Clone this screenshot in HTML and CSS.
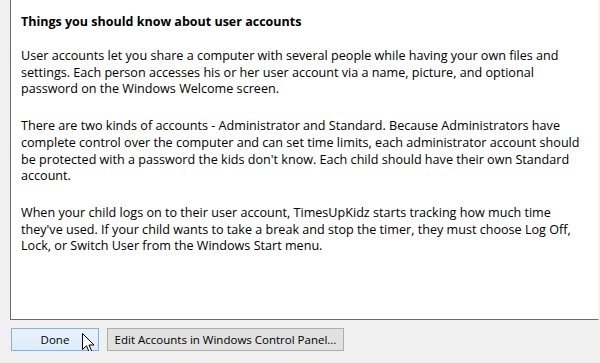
FILE: index.html
```html
<!DOCTYPE html>
<html lang="en">

<head>
    <meta charset="UTF-8">
    <title>User accounts</title>
    <link rel="stylesheet" href="styles.css">
</head>

<body>

    <div class="panel">
        <h2 class="panel__title">Things you should know about user accounts</h2>
        <p class="panel__text">User accounts let you share a computer with several people while having your own files and<br>
            settings. Each person accesses his or her user account via a name, picture, and optional<br>
            password on the Windows Welcome screen.</p>
        <p class="panel__text">There are two kinds of accounts - Administrator and Standard. Because Administrators have<br>
            complete control over the computer and can set time limits, each administrator account should<br>
            be protected with a password the kids don't know. Each child should have their own Standard<br>
            account.</p>
        <p class="panel__text">When your child logs on to their user account, TimesUpKidz starts tracking how much time<br>
            they've used. If your child wants to take a break and stop the timer, they must choose Log Off,<br>
            Lock, or Switch User from the Windows Start menu.</p>
    </div>

    <div class="buttons">
        <div class="button button--default">Done
            <svg class="cursor" width="13" height="21" viewBox="0 0 13 21">
                <path d="M0.5 0.5 L0.5 16.5 L4.5 12.8 L7.3 19.5 L9.8 18.4 L7 12 L12 12 Z" fill="#fff" stroke="#000" stroke-width="1" stroke-linejoin="miter" />
            </svg>
        </div>
        <div class="button button--wide">Edit Accounts in Windows Control Panel...</div>
    </div>

</body>

</html>
```

FILE: styles.css
```css
body {
    margin: 0;
    background-color: #f0f0f0;
    font-family: "Open Sans", "Noto Sans", sans-serif;
    font-size: 12.6px;
    color: #000;
}

.panel {
    box-sizing: border-box;
    width: 589px;
    height: 320px;
    margin-left: 10px;
    padding: 12px 10px 0 10px;
    background-color: #fff;
    border-left: 1px solid #6b6b6b;
    border-bottom: 1px solid #6b6b6b;
    border-right: 1px solid #f7f7f7;
    white-space: nowrap;
}

.panel__title {
    margin: 0 0 16px 0;
    font-size: 12.5px;
    font-weight: bold;
    line-height: 20px;
}

.panel__text {
    margin: 0 0 20px 0;
    line-height: 16.7px;
}

.buttons {
    display: flex;
    gap: 8px;
    padding: 8px 0 0 11px;
    font-size: 11.5px;
}

.button {
    position: relative;
    box-sizing: border-box;
    height: 23px;
    display: flex;
    align-items: center;
    justify-content: center;
    background-color: #e1e1e1;
    border: 1px solid #adadad;
}

.button--default {
    width: 88px;
    background: linear-gradient(#e9f3fc, #dcecfc);
    border-color: #7eb4ea;
}

.button--wide {
    width: 237px;
}

.cursor {
    position: absolute;
    left: 70px;
    top: 4px;
}
```
